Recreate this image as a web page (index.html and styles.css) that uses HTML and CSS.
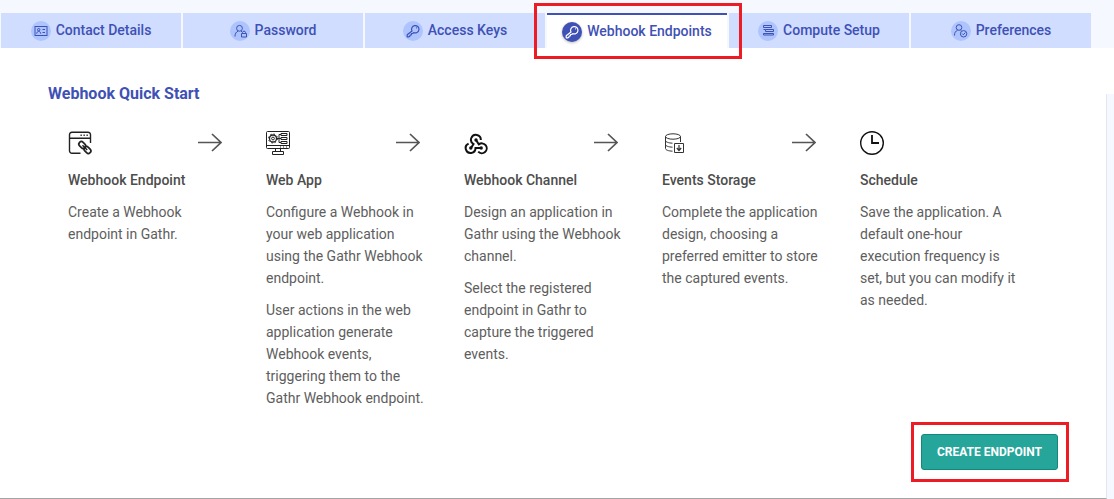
FILE: index.html
```html
<!DOCTYPE html>
<html lang="en">
<head>
<meta charset="utf-8">
<title>Webhook Endpoints</title>
<link rel="stylesheet" href="styles.css">
</head>
<body>
<svg class="defs" width="0" height="0" aria-hidden="true">
  <symbol id="arrow" viewBox="0 0 24 20"><path d="M0 9.500h23M14 1l9 8.500-9 8.500" fill="none" stroke="#555" stroke-width="1.700"/></symbol>
  <symbol id="key" viewBox="0 0 20 20"><path d="M9 10a3.700 3.700 0 1 1 1.700 1.600l-1 .9-1.200.2-.2 1.200-1.200.2-.3 1.200-.8.500H4.200v-2zM13 6.900h.8" fill="none" stroke="currentColor" stroke-width="1.200" stroke-linejoin="round"/></symbol>
</svg>
<nav class="tabs">
  <a class="tab" href="#contact">
    <svg class="tab-icon" viewBox="0 0 20 20"><g fill="none" stroke="currentColor"><rect x="4" y="5.500" width="12" height="9"/><circle cx="7.700" cy="8.700" r="1.200"/><path d="M5.700 12.700c0-3 4-3 4 0M11.500 8.500H14M11.500 11.500H14"/></g></svg>
    <span class="tab-label">Contact Details</span>
  </a>
  <a class="tab" href="#password">
    <svg class="tab-icon" viewBox="0 0 20 20"><g fill="none" stroke="currentColor"><circle cx="9.500" cy="7.300" r="2.900"/><path d="M5 15.500c0-3 1.200-4.500 3-5.300M11 10.200l1 .6M11.500 12.500h5v3.500h-5zM12.500 12.500v-1c0-1.800 3-1.800 3 0v1"/></g></svg>
    <span class="tab-label">Password</span>
  </a>
  <a class="tab" href="#keys">
    <svg class="tab-icon"><use href="#key"/></svg>
    <span class="tab-label">Access Keys</span>
  </a>
  <a class="tab tab-active" href="#webhooks" aria-current="page">
    <svg class="tab-icon"><use href="#key"/></svg>
    <span class="tab-label">Webhook Endpoints</span>
    <span class="callout callout-tab"></span>
  </a>
  <a class="tab" href="#compute">
    <svg class="tab-icon" viewBox="0 0 20 20"><g fill="none" stroke="currentColor"><path d="M5.500 4.500h8v2h-8zM7.500 8.500h8v2h-8zM5.500 12.500h10v1.500h-10zM5.500 8.500h2"/></g></svg>
    <span class="tab-label">Compute Setup</span>
  </a>
  <a class="tab" href="#preferences">
    <svg class="tab-icon" viewBox="0 0 20 20"><g fill="none" stroke="currentColor"><circle cx="8" cy="6.500" r="2.800"/><path d="M3.500 14.500c0-3 1-4.300 3-5.200M9.500 9l1 .8M11 12.500l1.300 1.300 2-2.200"/><circle cx="12.600" cy="12.800" r="3.200"/></g></svg>
    <span class="tab-label">Preferences</span>
  </a>
</nav>
<div class="strip"></div>
<main class="panel">
  <h1 class="title">Webhook Quick Start</h1>
  <div class="steps">
    <section class="step">
      <div class="step-head">
        <svg class="step-icon" viewBox="0 0 24 24"><g fill="none" stroke="#222" stroke-width="1.400"><path d="M12.500 22.200H4A2.500 2.500 0 0 1 1.500 19.700V4A2.500 2.500 0 0 1 4 1.200h16A2.500 2.500 0 0 1 22.500 4v8M1.500 7.200h21"/><path d="M12.500 4.300h1.300M15.500 4.300h1.300M18.500 4.300h1.300"/><rect x="10.500" y="11.500" width="7.500" height="5" rx="2.500" transform="rotate(45 14.250 14)" stroke-width="1.700"/><rect x="15.700" y="16.500" width="7.500" height="5" rx="2.500" transform="rotate(45 19.450 19)" stroke-width="1.700"/><path d="M14.500 14.300l4.700 4.700" stroke-width="1.500"/></g></svg>
        <svg class="arrow"><use href="#arrow"/></svg>
      </div>
      <h2 class="step-title">Webhook Endpoint</h2>
      <p class="text">Create a Webhook endpoint in Gathr.</p>
    </section>
    <section class="step">
      <div class="step-head">
        <svg class="step-icon" viewBox="0 0 24 24"><g fill="none" stroke="#222"><rect x=".5" y=".5" width="23" height="17" rx="1"/><path d="M.5 14.500h23M9.500 17.500v3M14.500 17.500v3M6.500 20.500h11v3h-11zM14 16h1M17 16h1M20 16h1M11 7.500h4M13 3.500v8M13 3.500h2M13 11.500h2M15 2.500h6v2h-6zM15 6.500h6v2h-6zM15 10.500h6v2h-6z"/><circle cx="7" cy="7.500" r="1.400"/><circle cx="7" cy="7.500" r="3.500" stroke-width="1.300"/><circle cx="7" cy="7.500" r="4.500" stroke-dasharray="1.600 1.934"/></g></svg>
        <svg class="arrow"><use href="#arrow"/></svg>
      </div>
      <h2 class="step-title">Web App</h2>
      <p class="text">Configure a Webhook in your web application using the Gathr Webhook endpoint.</p>
      <p class="text">User actions in the web application generate Webhook events, triggering them to the Gathr Webhook endpoint.</p>
    </section>
    <section class="step">
      <div class="step-head">
        <svg class="step-icon" viewBox="0 0 24 24"><g fill="none" stroke="#111" stroke-width="2"><path d="M16.800 9A4.900 4.900 0 1 0 9.500 13L7 17M4.600 12.600A4.900 4.900 0 1 0 11.500 17H17M12 9l2.800 4.400A4.900 4.900 0 1 1 14.200 20.600"/></g><g fill="#111"><circle cx="12" cy="9" r="1.700"/><circle cx="6.800" cy="17" r="1.700"/><circle cx="17.200" cy="17" r="1.700"/></g></svg>
        <svg class="arrow"><use href="#arrow"/></svg>
      </div>
      <h2 class="step-title">Webhook Channel</h2>
      <p class="text">Design an application in Gathr using the Webhook channel.</p>
      <p class="text">Select the registered endpoint in Gathr to capture the triggered events.</p>
    </section>
    <section class="step">
      <div class="step-head">
        <svg class="step-icon" viewBox="0 0 24 24"><g fill="none" stroke="#333"><ellipse cx="11" cy="5.500" rx="7.500" ry="2.700"/><path d="M3.500 5.500v12c0 1.500 3 2.500 7 2.700M18.500 5.500v5.500M3.500 9.500c0 1.500 3 2.500 7 2.700M3.500 13.500c0 1.500 3 2.500 7 2.700"/><path d="M12.500 12.500h9v9h-9z"/><path d="M17 14v5.500M14.800 17l2.200 2.500 2.200-2.500" stroke-width="1.200"/></g></svg>
        <svg class="arrow"><use href="#arrow"/></svg>
      </div>
      <h2 class="step-title">Events Storage</h2>
      <p class="text">Complete the application design, choosing a preferred emitter to store the captured events.</p>
    </section>
    <section class="step">
      <div class="step-head">
        <svg class="step-icon" viewBox="0 0 24 24"><g fill="none" stroke="#111"><circle cx="12" cy="12" r="11.300" stroke-width="1.400"/><path d="M12 4v8h7" stroke-width="1.800"/></g></svg>
      </div>
      <h2 class="step-title">Schedule</h2>
      <p class="text">Save the application. A default one-hour execution frequency is set, but you can modify it as needed.</p>
    </section>
  </div>
  <div class="actions">
    <button class="create" type="button">CREATE ENDPOINT<span class="callout callout-button"></span></button>
  </div>
</main>
</body>
</html>
```
FILE: styles.css
```css
* {
  box-sizing: border-box;
}

body {
  margin: 0;
  min-height: 100vh;
  display: flex;
  flex-direction: column;
  background: #f5f8ff;
  font-family: Roboto, "Liberation Sans", sans-serif;
  font-size: 14px;
  line-height: 22px;
  color: #5e5e5e;
}

.defs {
  position: absolute;
}

.tabs {
  display: flex;
  gap: 2px;
  padding: 13px 23px 0 1px;
}

.tab {
  position: relative;
  flex: 1;
  height: 35px;
  display: flex;
  align-items: center;
  justify-content: center;
  gap: 5px;
  background: #d0ddff;
  color: #3f51b5;
  font-weight: 500;
  text-decoration: none;
  white-space: nowrap;
}

.tab-label {
  padding-bottom: 2px;
}

.tab-icon {
  width: 20px;
  height: 20px;
  border-radius: 50%;
  background: #adc4ff;
}

.tab-active {
  background: #fff;
  border-top: 2px solid #3f51b5;
}

.tab-active .tab-icon {
  background: #3f51b5;
  color: #fff;
  box-shadow: 0 1px 3px #0004;
}

.callout {
  position: absolute;
  z-index: 1;
  border: 3px solid #ed1c24;
  pointer-events: none;
}

.callout-tab {
  inset: -12px -15px -11px -13px;
}

.callout-button {
  inset: -13px -12px -13px -11px;
}

/* White band under the tabs; it covers the top of the panel's side border. */
.strip {
  position: relative;
  height: 46px;
  margin-bottom: -46px;
  background: #fff;
}

.panel {
  flex: 1;
  margin-right: 7px;
  padding: 35px 48px 28px;
  background: #fff;
  border-right: 1px solid #e3e8f0;
  border-bottom: 1px solid #a5a5a5;
}

.title {
  position: relative;
  z-index: 1;
  margin: 0;
  font-size: 16px;
  font-weight: 700;
  color: #3f51b5;
}

.steps {
  display: grid;
  grid-template-columns: repeat(5, 1fr);
  margin-top: 26px;
  padding-left: 20px;
}

.step {
  padding-right: 38px;
}

.step-head {
  display: flex;
  align-items: center;
  justify-content: space-between;
  height: 24px;
  padding-right: 6px;
}

.step-icon {
  width: 24px;
  height: 24px;
}

.arrow {
  width: 24px;
  height: 20px;
}

.step-title {
  margin: 14px 0 10px;
  font-size: 14px;
  font-weight: 500;
  color: #4d4d4d;
}

.text {
  margin: 0 0 10px;
}

.actions {
  display: flex;
  justify-content: flex-end;
  margin-top: 15px;
}

.create {
  position: relative;
  height: 36px;
  padding: 0 15px;
  border: 1px solid #14877b;
  border-radius: 3px;
  background: #26a69a;
  color: #fff;
  font-family: inherit;
  font-size: 12px;
  font-weight: 700;
}
```
